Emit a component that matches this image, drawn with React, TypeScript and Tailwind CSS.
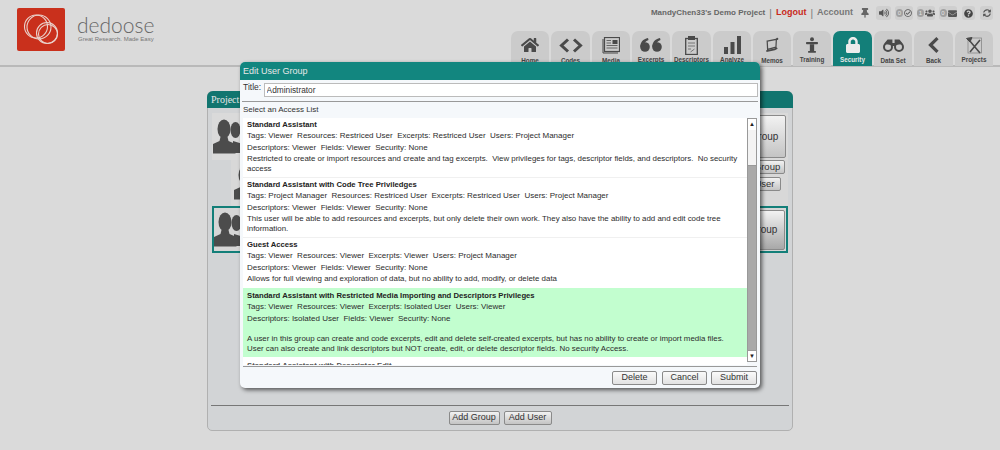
import { FaHome, FaLock, FaVolumeUp, FaThumbtack, FaUsers, FaEnvelope, FaQuestionCircle, FaRegCheckCircle, FaSyncAlt } from 'react-icons/fa';

const font = { fontFamily: '"Liberation Sans", Arial, sans-serif' };

// tab icons, drawn where the icon packages have nothing close
function Chevrons() {
    return (
        <svg width="24" height="15" viewBox="0 0 24 15" fill="none" stroke="#4a4a4a" strokeWidth="3">
            <path d="M9 1.5 L2.500 7.500 L9 13.500" />
            <path d="M15 1.500 L21.500 7.500 L15 13.500" />
        </svg>
    );
}

function Newspaper() {
    return (
        <svg width="18" height="17" viewBox="0 0 18 17" fill="none" stroke="#4a4a4a">
            <path d="M1 2v14h15" strokeWidth="1" />
            <rect x="2.500" y="0.500" width="15" height="14" strokeWidth="1.200" />
            <rect x="10.500" y="3" width="5" height="4" fill="#4a4a4a" stroke="none" />
            <path d="M4.500 3.500h4.500M4.500 6h4.500M4.500 8.500h11M4.500 11h11" strokeWidth="1" stroke="#666" />
        </svg>
    );
}

function Quotes() {
    return (
        <svg width="22" height="14" viewBox="0 0 22 14" fill="#4a4a4a">
            <circle cx="5" cy="9" r="4.800" />
            <path d="M0.300 9 C0.300 4 3 1 8 0 L8.500 2 C5.500 3 4 5 4.200 7z" />
            <circle cx="17" cy="9" r="4.800" />
            <path d="M12.300 9 C12.300 4 15 1 20 0 L20.500 2 C17.500 3 16 5 16.200 7z" />
        </svg>
    );
}

function Clipboard() {
    return (
        <svg width="13" height="19" viewBox="0 0 13 19" fill="none" stroke="#4a4a4a">
            <rect x="0.700" y="2.500" width="11.600" height="16" strokeWidth="1.300" />
            <rect x="3.500" y="0.500" width="6" height="3" fill="#4a4a4a" />
            <path d="M3 7h7M3 10h7M3 13h3M5.500 16l4-3" strokeWidth="1" stroke="#777" />
        </svg>
    );
}

function Bars() {
    return (
        <svg width="17" height="18" viewBox="0 0 17 18" fill="#4a4a4a">
            <rect x="0" y="11" width="4" height="7" />
            <rect x="6.500" y="6" width="4" height="12" />
            <rect x="13" y="0" width="4" height="18" />
        </svg>
    );
}

function Memo() {
    return (
        <svg width="14" height="16" viewBox="0 0 16 17" fill="none" stroke="#4a4a4a" strokeWidth="1.400">
            <path d="M2.500 4 L13 2 L12.500 11 L3 13.500 Z" />
            <path d="M1.500 15.500 L11 13.500 L14 12" strokeWidth="2" />
            <circle cx="14" cy="1.500" r="1.200" fill="#4a4a4a" stroke="none" />
        </svg>
    );
}

function Podium() {
    return (
        <svg width="12" height="18" viewBox="0 0 14 18" fill="#4a4a4a">
            <circle cx="7" cy="2.400" r="2.300" />
            <rect x="0" y="5.500" width="14" height="2.600" rx="1" />
            <path d="M4.500 8h5v8h2v2h-9v-2h2z" />
        </svg>
    );
}

function Binoculars() {
    return (
        <svg width="21" height="13" viewBox="0 0 21 13" fill="none" stroke="#4a4a4a" strokeWidth="2">
            <circle cx="5" cy="8" r="4" />
            <circle cx="16" cy="8" r="4" />
            <path d="M2 5 L5 1.500 H8.500 V6 M19 5 L16 1.500 H12.500 V6" strokeWidth="1.800" fill="#4a4a4a" />
            <rect x="8.500" y="4" width="4" height="3" fill="#4a4a4a" stroke="none" />
        </svg>
    );
}

function ChevronBack() {
    return (
        <svg width="11" height="16" viewBox="0 0 11 16" fill="none" stroke="#4a4a4a" strokeWidth="3.200">
            <path d="M9.500 1.200 L2.500 8 L9.500 14.800" />
        </svg>
    );
}

function ProjectTools() {
    return (
        <svg width="17" height="17" viewBox="0 0 17 17" fill="none" stroke="#4a4a4a">
            <rect x="2" y="1" width="13.500" height="15" strokeWidth="0.800" stroke="#888" />
            <path d="M3 3 L14 16 M14 3 L4 15" strokeWidth="1.600" />
            <path d="M0.500 1.500 L6 0.500 L4 5 Z" fill="#4a4a4a" />
        </svg>
    );
}

function Avatar({ className }: { className?: string }) {
    return (
        <svg className={className} width="30" height="36" viewBox="0 0 30 36" fill="#4c4c4c">
            <ellipse cx="22.500" cy="11" rx="5" ry="8" />
            <path d="M20 22 L30 25 V34 H20Z" />
            <ellipse cx="11" cy="10" rx="6.500" ry="9.500" />
            <path d="M7.500 18h7l1 4 7 3v9.500H0V25l6.500-3z" />
        </svg>
    );
}

function Logo() {
    return (
        <div className="flex items-center justify-center w-[48px] h-[43px] rounded-[2px] bg-[#c9301c]">
            <svg width="37" height="31" viewBox="0 0 37 31" fill="none" stroke="#ead3cd" strokeWidth="1.100">
                <circle cx="13" cy="12.500" r="11.500" />
                <circle cx="16" cy="13" r="12" />
                <circle cx="25" cy="20" r="9.500" />
                <circle cx="24" cy="19" r="10.500" />
            </svg>
        </div>
    );
}

const tabs = [
    { label: 'Home', icon: <FaHome size={18} color="#4a4a4a" />, w: 'w-[38px]', low: true },
    { label: 'Codes', icon: <Chevrons />, w: 'w-[39px]', low: true },
    { label: 'Media', icon: <Newspaper />, w: 'w-[38px]', low: true },
    { label: 'Excerpts', icon: <Quotes />, w: 'w-[38px]' },
    { label: 'Descriptors', icon: <Clipboard />, w: 'w-[39px]' },
    { label: 'Analyze', icon: <Bars />, w: 'w-[38px]' },
    { label: 'Memos', icon: <Memo />, w: 'w-[38px]', low: true },
    { label: 'Training', icon: <Podium />, w: 'w-[38px]' },
    { label: 'Security', icon: <FaLock size={16} color="#ececec" />, w: 'w-[39px]', active: true },
    { label: 'Data Set', icon: <Binoculars />, w: 'w-[38px]', low: true },
    { label: 'Back', icon: <ChevronBack />, w: 'w-[39px]', low: true },
    { label: 'Projects', icon: <ProjectTools />, w: 'w-[38px]' },
];

const accessLists = [
    {
        name: 'Standard Assistant',
        tags: 'Tags: Viewer  Resources: Restriced User  Excerpts: Restriced User  Users: Project Manager',
        desc: 'Descriptors: Viewer  Fields: Viewer  Security: None',
        body: 'Restricted to create or import resources and create and tag excerpts.  View privileges for tags, descriptor fields, and descriptors.  No security access',
        pad: 'pb-[2.500px]',
    },
    {
        name: 'Standard Assistant with Code Tree Priviledges',
        tags: 'Tags: Project Manager  Resources: Restriced User  Excerpts: Restriced User  Users: Project Manager',
        desc: 'Descriptors: Viewer  Fields: Viewer  Security: None',
        body: 'This user will be able to add resources and excerpts, but only delete their own work. They also have the ability to add and edit code tree information.',
        pad: 'pb-[3.500px]',
    },
    {
        name: 'Guest Access',
        tags: 'Tags: Viewer  Resources: Viewer  Excerpts: Viewer  Users: Project Manager',
        desc: 'Descriptors: Viewer  Fields: Viewer  Security: None',
        body: 'Allows for full viewing and exploration of data, but no ability to add, modify, or delete data',
        pad: 'pb-[3.500px]',
    },
];

function GrayButton({ children, className }: { children: React.ReactNode; className?: string }) {
    return (
        <button className={`flex items-center justify-center rounded-[2px] border border-[#8a8a8a] bg-gradient-to-b from-[#f2f2f2] to-[#c4c4c4] text-[9px] text-[#333] ${className}`}>
            {children}
        </button>
    );
}

function IconChip({ children, className }: { children: React.ReactNode; className: string }) {
    return <div className={`flex items-center justify-center gap-[1px] h-[14px] rounded-[3px] bg-[#cfcfcf] ${className}`}>{children}</div>;
}

function Count({ n }: { n: number }) {
    return <span className="w-[7px] h-[8px] rounded-full bg-[#a0a0a0] text-[6px] leading-[8px] text-center text-[#e4e4e4]">{n}</span>;
}

export default function App() {
    return (
        <div className="relative w-[1000px] h-[450px] overflow-hidden bg-[#dadada]" style={font}>
            {/* header */}
            <header className="relative h-[67px] border-b-2 border-[#b9b9b9] flex justify-between pl-[17px] pr-[7px]">
                <div className="flex pt-[8px]">
                    <Logo />
                    <div className="ml-[12px] mt-[5px]">
                        <div className="text-[21px] leading-[24px] font-light text-[#666]" style={{ fontFamily: 'Lato, sans-serif' }}>dedoose</div>
                        <div className="text-[6px] leading-[9px] -mt-[2px] ml-[1px] text-[#777] whitespace-nowrap">Great Research. Made Easy</div>
                    </div>
                </div>
                <div className="flex flex-col items-end">
                    <div className="flex items-center h-[14px] mt-[6px] whitespace-nowrap">
                        <span className="text-[8px] font-bold text-[#666]">MandyChen33's Demo Project</span>
                        <span className="ml-[4px] text-[#777] text-[10px]">|</span>
                        <span className="ml-[4px] text-[9px] font-bold text-[#c8281a]">Logout</span>
                        <span className="ml-[4px] text-[#777] text-[10px]">|</span>
                        <span className="ml-[4px] text-[9px] font-bold text-[#777]">Account</span>
                        <FaThumbtack size={10} color="#666" className="ml-[7px]" />
                        <IconChip className="w-[15px] ml-[6px]"><FaVolumeUp size={10} color="#555" /></IconChip>
                        <IconChip className="w-[18px] ml-[4px]"><Count n={0} /><FaRegCheckCircle size={8} color="#555" /></IconChip>
                        <IconChip className="w-[18px] ml-[4px]"><Count n={1} /><FaUsers size={10} color="#555" /></IconChip>
                        <IconChip className="w-[18px] ml-[4px]"><Count n={0} /><FaEnvelope size={9} color="#555" /></IconChip>
                        <IconChip className="w-[13px] ml-[5px]"><FaQuestionCircle size={9} color="#444" /></IconChip>
                        <IconChip className="w-[13px] ml-[5px]"><FaSyncAlt size={8} color="#555" /></IconChip>
                    </div>
                    <nav className="flex gap-[2px] mt-[11px]">
                        {tabs.map((t) => (
                            <div
                                key={t.label}
                                className={`flex flex-col items-center h-[35px] rounded-t-[7px] ${t.w} ${t.active ? 'bg-[#137f79] text-[#e8e8e8]' : 'bg-[#cbcbcb] text-[#444]'}`}
                            >
                                <div className="flex items-center justify-center h-[20px] mt-[4px]">{t.icon}</div>
                                <div className={`text-[6.300px] font-bold leading-[7px] whitespace-nowrap ${t.low ? 'mt-[2px]' : 'mt-[1px]'}`}>{t.label}</div>
                            </div>
                        ))}
                    </nav>
                </div>
            </header>

            {/* project panel behind the dialog */}
            <main className="ml-[207px] mt-[24px] w-[586px] h-[340px] flex flex-col rounded-[5px] border border-[#b0b0b0] bg-[#d2d4d6]">
                <div className="h-[17px] -m-[1px] mb-0 rounded-t-[6px] bg-[#11756f] text-[10px] leading-[17px] text-[#e6e6e6] pl-[4px]" style={{ fontFamily: '"Liberation Serif", serif' }}>Project</div>
                <div className="flex-1 px-[4px] pt-[5px]">
                    <div className="flex justify-between items-center h-[47px] bg-[#dadada] pl-[1px] pr-[2px]">
                        <Avatar />
                        <GrayButton className="w-[60px] h-[43px] pl-[17px] !text-[10px]">Group</GrayButton>
                    </div>
                    <div className="flex justify-between h-[46px] ml-[19px] pr-[2px] bg-[#d8d8d8]">
                        <Avatar className="mt-[5px] ml-[3px]" />
                        <div className="flex flex-col items-end gap-[3px] pr-[1px]">
                            <GrayButton className="w-[50px] h-[14px] pl-[14px] !text-[9.500px]">Group</GrayButton>
                            <GrayButton className="w-[30px] h-[14px] mr-[4px] pr-[3px] !text-[9.500px]">User</GrayButton>
                        </div>
                    </div>
                    <div className="flex justify-between items-center h-[47px] border-2 border-[#137f79] bg-[#d6d6d6] pr-[1px]">
                        <Avatar />
                        <GrayButton className="w-[60px] h-[40px] pl-[17px] !text-[10px] !to-[#a8a8a8]">Group</GrayButton>
                    </div>
                </div>
                <div className="mx-[3px] border-t border-[#777] h-[25px] flex justify-center items-center gap-[4px]">
                    <GrayButton className="w-[51px] h-[14px]">Add Group</GrayButton>
                    <GrayButton className="w-[48px] h-[14px]">Add User</GrayButton>
                </div>
            </main>

            {/* dialog */}
            <div className="absolute left-[240px] top-[62px] w-[520px] h-[326px] flex flex-col rounded-[5px] bg-[#f5f8fb] shadow-[2px_2px_4px_rgba(0,0,0,0.6)] text-[#222]">
                <div className="h-[18px] rounded-t-[5px] bg-[#12867f] text-[9px] leading-[18px] text-[#e8e8e8] pl-[3px]">Edit User Group</div>
                <div className="flex h-[22px] mx-[2px] pt-[3px] border-b border-[#999]">
                    <span className="text-[8.500px] leading-[9px] text-[#333] ml-[1px]">Title:</span>
                    <input
                        readOnly
                        value="Administrator"
                        className="ml-[2.500px] w-[494px] h-[14px] border border-[#bbb] bg-white pl-[2px] text-[8.300px] text-[#333] outline-none"
                    />
                </div>
                <div className="h-[16px] pl-[3px] text-[8px] leading-[16px] text-[#333]">Select an Access List</div>
                <div className="flex h-[244px] mx-[3px]">
                    <div className="w-[504px] h-[247px] overflow-hidden bg-white text-[8px] text-[#2c2c2c]">
                        {accessLists.map((a) => (
                            <div key={a.name} className={`pl-[4px] pt-[1px] border-b border-[#f0f0f0] ${a.pad}`}>
                                <div className="font-bold text-[7.700px] leading-[11px] text-[#222]">{a.name}</div>
                                <div className="leading-[12px] whitespace-pre">{a.tags}</div>
                                <div className="leading-[12px] whitespace-pre">{a.desc}</div>
                                <div className="text-[7.900px] leading-[10px] whitespace-pre-wrap">{a.body}</div>
                            </div>
                        ))}
                        <div className="pl-[4px] pt-[2px] h-[69px] bg-[#c2fecf] mt-[-1px]">
                            <div className="font-bold text-[7.700px] leading-[11px] text-[#222]">Standard Assistant with Restricted Media Importing and Descriptors Privileges</div>
                            <div className="leading-[12px] whitespace-pre">Tags: Viewer  Resources: Viewer  Excerpts: Isolated User  Users: Viewer</div>
                            <div className="leading-[12px] whitespace-pre">Descriptors: Isolated User  Fields: Viewer  Security: None</div>
                            <div className="text-[7.900px] leading-[10px] mt-[9px] whitespace-nowrap">
                                A user in this group can create and code excerpts, edit and delete self-created excerpts, but has no ability to create or import media files.<br />
                                User can also create and link descriptors but NOT create, edit, or delete descriptor fields. No security Access.
                            </div>
                        </div>
                        <div className="pl-[4px] pt-[3px] font-bold text-[7.700px] leading-[11px] text-[#555]">Standard Assistant with Descriptor Edit</div>
                    </div>
                    <div className="w-[10px] flex flex-col border border-[#999] bg-[#a9a9a9]">
                        <div className="h-[11px] bg-white flex items-center justify-center text-[6px] text-[#222]">▲</div>
                        <div className="h-[36px] bg-[#f3f3f3] border-b border-[#999]" />
                        <div className="flex-1" />
                        <div className="h-[11px] bg-white flex items-center justify-center text-[6px] text-[#222] border-t border-[#999]">▼</div>
                    </div>
                </div>
                <div className="mt-[4px] mx-[3px] border-t border-[#999] flex justify-end pt-[4px]">
                    <GrayButton className="w-[45px] h-[14px] mr-[5px] !from-[#fafafa] !to-[#e2e2e2]">Delete</GrayButton>
                    <GrayButton className="w-[45px] h-[14px] mr-[4px] !from-[#fafafa] !to-[#e2e2e2]">Cancel</GrayButton>
                    <GrayButton className="w-[46px] h-[14px] !from-[#fafafa] !to-[#e2e2e2]">Submit</GrayButton>
                </div>
            </div>
        </div>
    );
}
